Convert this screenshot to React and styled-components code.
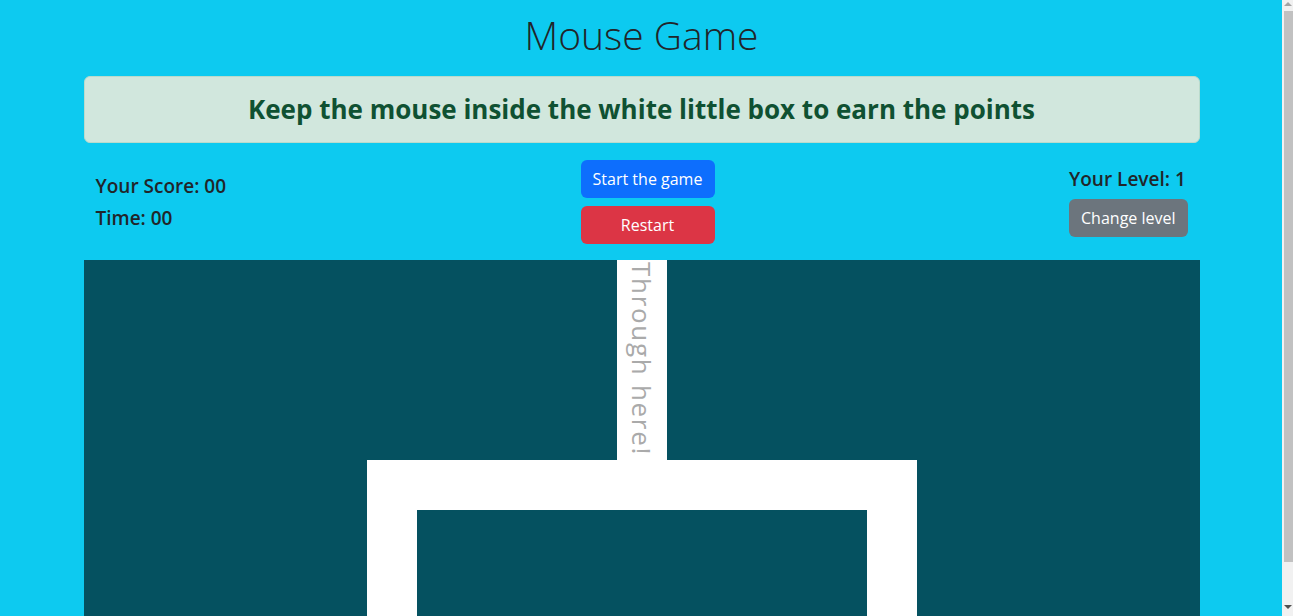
import React from 'react';
import styled, { createGlobalStyle } from 'styled-components';

const GlobalStyle = createGlobalStyle`
  html, body {
    margin: 0;
    padding: 0;
  }
  body {
    background-color: #0dcaf0;
    font-family: "Open Sans", "Liberation Sans", sans-serif;
    color: #212529;
    padding: 0 11px 0 1px; /* room for the scrollbar drawn below */
  }
`;

const App = () => {
  return (
    <>
      <GlobalStyle />
      <Container>
        <Title>Mouse Game</Title>
        <Alert>
          <AlertText>Keep the mouse inside the white little box to earn the points</AlertText>
        </Alert>
        <InfoRow>
          <LeftCol>
            <Stat>Your Score: 00</Stat>
            <Stat>Time: 00</Stat>
          </LeftCol>
          <CenterCol>
            <Button variant="primary">Start the game</Button>
            <Button variant="danger">Restart</Button>
          </CenterCol>
          <RightCol>
            <LevelBox>
              <Stat>Your Level: 1</Stat>
              <Button variant="secondary" $auto>Change level</Button>
            </LevelBox>
          </RightCol>
        </InfoRow>
        <Board>
          <Passage>
            <PassageLabel>Through here!</PassageLabel>
          </Passage>
          <Frame>
            <FrameInner />
          </Frame>
        </Board>
      </Container>
      <ScrollBar>
        <Arrow />
        <Thumb />
        <Arrow $down />
      </ScrollBar>
    </>
  );
};

export default App;

// Styling
const Container = styled.div`
  width: 1116px;
  margin: 0 auto;
  padding: 0 12px;
`;

const Title = styled.h1`
  margin: 0;
  padding: 11px 0 18px;
  text-align: center;
  font-size: 39px;
  font-weight: 300;
  line-height: 47px;
  color: #212529;
`;

const Alert = styled.div`
  background-color: #d1e7dd;
  border: 1px solid #badbcc;
  border-radius: 6px;
  padding: 16px;
  margin-bottom: 16px;
`;

const AlertText = styled.h3`
  margin: 0;
  text-align: center;
  font-size: 26px;
  font-weight: 700;
  line-height: 33px;
  color: #0f5132;
`;

const InfoRow = styled.div`
  display: grid;
  grid-template-columns: 1fr 1fr 1fr;
  height: 101px;
`;

const LeftCol = styled.div`
  padding: 15px 12px 0;
  display: flex;
  flex-direction: column;
  gap: 8px;
`;

const CenterCol = styled.div`
  display: flex;
  flex-direction: column;
  align-items: center;
  gap: 8px;
  padding: 1px 0 0 12px;
`;

const RightCol = styled.div`
  display: flex;
  justify-content: flex-end;
  padding: 8px 12px 0;
`;

const LevelBox = styled.div`
  display: flex;
  flex-direction: column;
  align-items: flex-start;
  gap: 8px;
`;

const Stat = styled.h5`
  margin: 0;
  font-size: 19px;
  font-weight: 600;
  line-height: 24px;
  color: #212529;
`;

const buttonColors = {
  primary: '#0d6efd',
  danger: '#dc3545',
  secondary: '#6c757d',
};

const Button = styled.button`
  width: ${(p) => (p.$auto ? 'auto' : '134px')};
  height: 38px;
  padding: 0 12px;
  border: none;
  border-radius: 6px;
  background-color: ${(p) => buttonColors[p.variant]};
  color: #fff;
  font-family: "Open Sans", "Liberation Sans", sans-serif;
  font-size: 16px;
  line-height: 38px;
  cursor: pointer;
`;

const Board = styled.div`
  height: 620px;
  background-color: #055160;
  display: flex;
  flex-direction: column;
  align-items: center;
`;

const Passage = styled.div`
  flex-shrink: 0;
  width: 50px;
  height: 200px;
  background-color: #fff;
  display: flex;
  justify-content: center;
`;

const PassageLabel = styled.span`
  writing-mode: vertical-rl;
  font-size: 26px;
  letter-spacing: 1.7px;
  color: #aaaaaa;
  line-height: 50px;
  padding-top: 2px;
`;

const Frame = styled.div`
  flex-shrink: 0;
  width: 450px;
  height: 250px;
  border: 50px solid #fff;
  background-color: #fff;
`;

const FrameInner = styled.div`
  width: 100%;
  height: 100%;
  background-color: #055160;
`;

// browser scrollbar, drawn over the right edge
const ScrollBar = styled.div`
  position: fixed;
  top: 0;
  right: 0;
  bottom: 0;
  width: 11px;
  background-color: #f1f1f1;
  display: flex;
  flex-direction: column;
  align-items: flex-end;
`;

const Thumb = styled.div`
  width: 9px;
  height: 551px;
  background-color: #c1c1c1;
`;

const Arrow = styled.div`
  width: 0;
  height: 0;
  margin: ${(p) => (p.$down ? 'auto 1px 7px 0' : '2px 1px 5px 0')};
  border-left: 4px solid transparent;
  border-right: 4px solid transparent;
  ${(p) => (p.$down ? 'border-top: 4px solid #505050;' : 'border-bottom: 4px solid #a3a3a3;')}
`;
